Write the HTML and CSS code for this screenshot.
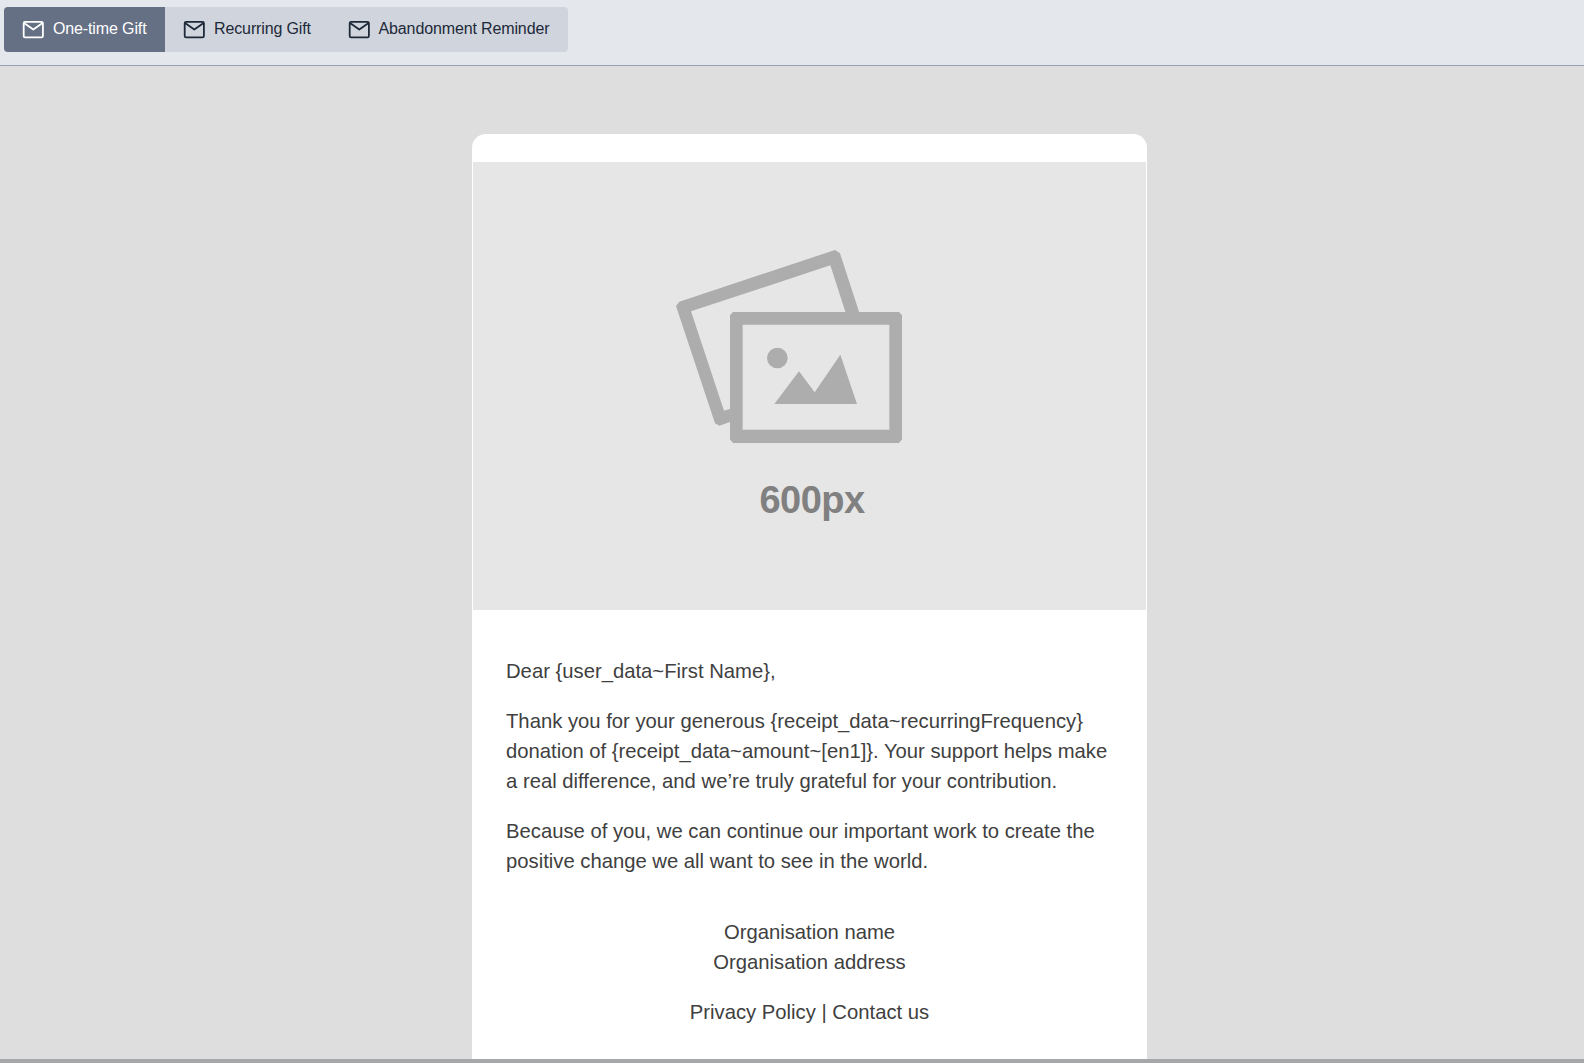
FILE: index.html
```html
<!DOCTYPE html>
<html lang="en">
<head>
    <meta charset="UTF-8">
    <meta name="viewport" content="width=device-width, initial-scale=1.0">
    <title>Email Preview</title>
    <link rel="stylesheet" href="styles.css">
</head>
<body>
    <svg class="sprite" width="0" height="0">
        <symbol id="mail" viewBox="0 0 24 24">
            <rect x="2.7" y="3.8" width="19.2" height="15.5" rx="1.4"/>
            <path d="M3 4.9l9.3 6.7 9.3-6.7"/>
        </symbol>
    </svg>

    <header class="toolbar">
        <div class="tabs">
            <button class="tab active"><svg class="icon"><use href="#mail"/></svg><span>One-time Gift</span></button>
            <button class="tab"><svg class="icon"><use href="#mail"/></svg><span>Recurring Gift</span></button>
            <button class="tab"><svg class="icon"><use href="#mail"/></svg><span>Abandonment Reminder</span></button>
        </div>
    </header>

    <main class="preview">
        <div class="email">
            <div class="hero">
                <svg class="photos" viewBox="0 0 780 660">
                    <path d="M48 213L58 200L525 45L540 55L598 233H557L511 91L93 229L192 527L212 521V560L178 572L165 565Z"/>
                    <path fill-rule="evenodd" d="M219 231H717L726 241V613L717 624H219L210 613V241ZM248 269V584H688V269Z"/>
                    <circle cx="352" cy="369" r="31"/>
                    <path d="M343 507L417 409L464 472L541 359L591 507Z"/>
                </svg>
                <div class="size">600px</div>
            </div>
            <div class="content">
                <p>Dear {user_data~First Name},</p>
                <p>Thank you for your generous {receipt_data~recurringFrequency}<br>donation of {receipt_data~amount~[en1]}. Your support helps make<br>a real difference, and we’re truly grateful for your contribution.</p>
                <p>Because of you, we can continue our important work to create the<br>positive change we all want to see in the world.</p>
            </div>
            <div class="footer">
                <p>Organisation name<br>Organisation address</p>
                <p>Privacy Policy | Contact us</p>
            </div>
        </div>
    </main>
</body>
</html>
```
FILE: styles.css
```css
* {
    box-sizing: border-box;
}
body {
    margin: 0;
    height: 100vh;
    display: flex;
    flex-direction: column;
    overflow: hidden;
    font-family: "Liberation Sans", Arial, sans-serif;
    background-color: #dedede;
    border-bottom: 4px solid #a5a7a8;
}
.sprite {
    position: absolute;
}
.toolbar {
    flex: none;
    height: 66px;
    padding: 7px 4px;
    background-color: #e4e7ec;
    border-bottom: 1px solid #98a2b3;
}
.tabs {
    display: inline-flex;
    border-radius: 4px;
    overflow: hidden;
    background-color: #d0d5dd;
}
.tab {
    display: flex;
    align-items: center;
    gap: 8px;
    height: 45px;
    padding: 0 18.6px 0 17px;
    border: none;
    background: none;
    color: #1d2939;
    font-family: inherit;
    font-size: 16px;
    letter-spacing: -0.13px;
    white-space: nowrap;
    cursor: pointer;
}
.tab span {
    margin-top: -2px;
}
.tab.active {
    background-color: #667085;
    color: #fff;
}
.icon {
    width: 24px;
    height: 24px;
    fill: none;
    stroke: currentColor;
    stroke-width: 1.8;
    stroke-linejoin: round;
}
.preview {
    flex: 1;
    min-height: 0;
    display: flex;
    padding: 68px 0 0 472px;
}
.email {
    width: 675px;
    padding: 28px 1px 0;
    border-radius: 14px 14px 0 0;
    background-color: #fff;
    color: #404040;
    font-size: 20.25px;
    line-height: 30px;
}
.hero {
    height: 448px;
    padding: 73px 0 0 187px;
    background-color: #e6e6e6;
}
.photos {
    display: block;
    width: 260px;
    height: 220px;
    fill: #adadad;
}
.size {
    width: 304px;
    margin-top: 24px;
    text-align: center;
    color: #808080;
    font-size: 38px;
    font-weight: bold;
    letter-spacing: -0.5px;
    line-height: 42px;
}
.content {
    padding: 46px 33px 0;
    white-space: nowrap;
}
p {
    margin: 0 0 20px;
}
.footer {
    padding-top: 21px;
    text-align: center;
}
```
